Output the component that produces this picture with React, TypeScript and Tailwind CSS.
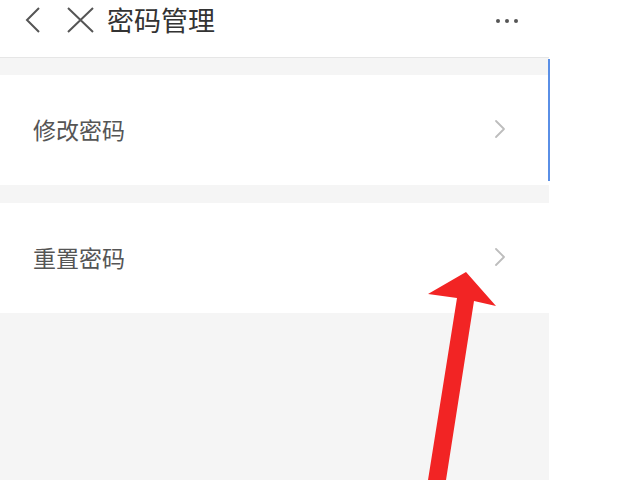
import React from "react";

const Chevron = () => (
  <svg width="12" height="20" viewBox="0 0 12 20" fill="none">
    <path d="M2 2 L10 10 L2 18" stroke="#bdbdbd" strokeWidth="1.8" strokeLinecap="round" strokeLinejoin="round" />
  </svg>
);

export default function App() {
  return (
    <div
      className="relative w-[640px] h-[480px] bg-white flex overflow-hidden"
      style={{ fontFamily: '"Noto Sans CJK SC", "Noto Sans", sans-serif' }}
    >
      <div className="w-[549px] h-full flex flex-col bg-[#f5f5f5]">
        <div className="h-[58px] bg-white border-b border-[#e6e6e6] flex items-start shrink-0">
          <svg className="ml-[24px] mt-[6px]" width="18" height="28" viewBox="0 0 18 28" fill="none">
            <path d="M15 2 L3 14 L15 26" stroke="#555" strokeWidth="2" strokeLinejoin="miter" />
          </svg>
          <svg className="ml-[25px] mt-[7px]" width="27" height="26" viewBox="0 0 27 26" fill="none">
            <path d="M1 1 L26 25 M26 1 L1 25" stroke="#555" strokeWidth="2" />
          </svg>
          <span className="ml-[13px] mt-[5px] text-[27px] leading-[30px] text-[#333]">密码管理</span>
          <div className="ml-auto mr-[31px] mt-[19px] flex gap-[5px]">
            <span className="w-[4px] h-[4px] rounded-full bg-[#555]" />
            <span className="w-[4px] h-[4px] rounded-full bg-[#555]" />
            <span className="w-[4px] h-[4px] rounded-full bg-[#555]" />
          </div>
        </div>
        <div className="h-[17px] shrink-0" />
        <div className="h-[110px] bg-white flex items-center pl-[33px] pr-[43px] shrink-0">
          <span className="text-[23px] text-[#555] leading-none -mt-[1px]">修改密码</span>
          <span className="ml-auto -mt-[3px]"><Chevron /></span>
        </div>
        <div className="h-[18px] shrink-0" />
        <div className="h-[110px] bg-white flex items-center pl-[33px] pr-[43px] shrink-0">
          <span className="text-[23px] text-[#555] leading-none -mt-[1px]">重置密码</span>
          <span className="ml-auto -mt-[3px]"><Chevron /></span>
        </div>
        <div className="flex-1" />
      </div>
      <div className="absolute left-[548px] top-[59px] w-[2px] h-[122px] bg-[#5a8fe6]" />
      <svg className="absolute left-0 top-0" width="640" height="480" viewBox="0 0 640 480">
        <polygon
          points="466,272 496,306 474,301 446,480 428,480 457,298 428,294"
          fill="#f22424"
        />
      </svg>
    </div>
  );
}
